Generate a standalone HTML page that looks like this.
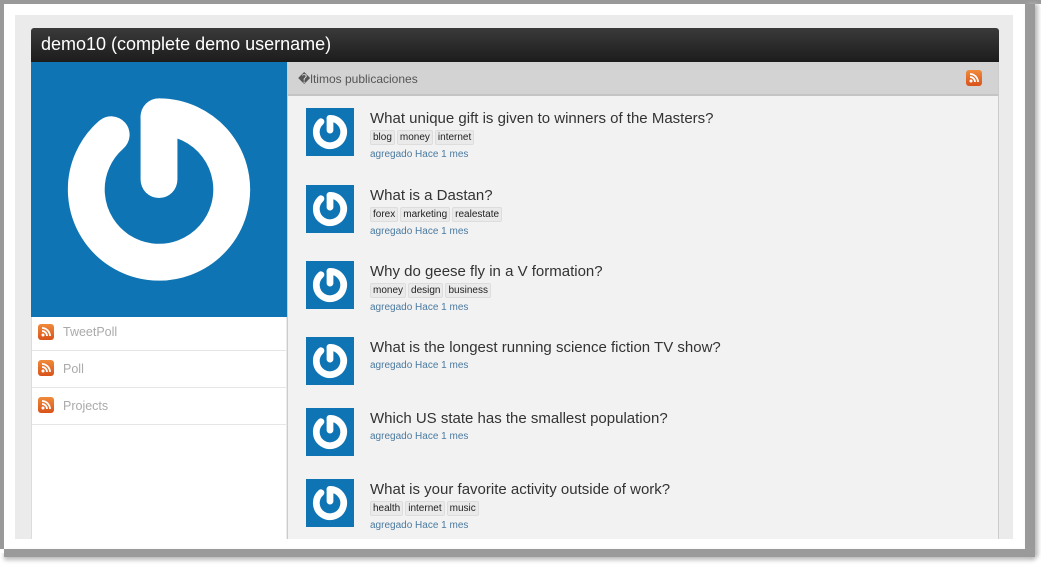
<!DOCTYPE html>
<html><head><meta charset="utf-8"><style>
*{margin:0;padding:0;box-sizing:border-box}
body{width:1041px;height:566px;background:#fff;font-family:"Liberation Sans",sans-serif;position:relative;overflow:hidden}
.frame{position:absolute;left:0;top:0;width:1041px;height:566px;background:#fff}
.b{position:absolute;background:#999}
.inner{position:absolute;left:15px;top:15px;width:998px;height:524px;background:#ebebeb}
.hdr{position:absolute;left:31px;top:28px;width:968px;height:34px;background:linear-gradient(#3a3a3a,#1c1c1c);border-radius:3px 3px 0 0;color:#fff;font-size:18px;padding:6px 10px}
.blue{position:absolute;left:31px;top:62px;width:256px;height:255px;background:#0e74b4}
.nav{position:absolute;left:31px;top:317px;width:255px;height:222px;background:#fff;border-left:1px solid #ddd}
.nav div{height:37px;border-bottom:1px solid #e6e6e6;color:#aaa;font-size:12.5px;padding-left:31px;line-height:30px;position:relative}
.nav div:first-child{height:34px}
.nav div+div{line-height:37px}
.rss{position:absolute;width:16px;height:16px;border-radius:3px;background:linear-gradient(#f08a3a,#d9531a)}
.rss svg{position:absolute;left:0;top:0}
.right{position:absolute;left:287px;top:62px;width:712px;height:477px;background:#f2f2f2;border-left:1px solid #ccc;border-right:1px solid #ccc}
.rh{height:34px;background:#d3d3d3;border-bottom:2px solid #c4c4c4;font-size:12px;color:#555;padding:10px 0 0 10px;position:relative}
.item{position:absolute;left:18px}
.th{position:absolute;left:0;top:0;width:48px;height:48px;background:#0e74b4}
.tx{position:absolute;left:64px;top:2px;white-space:nowrap}
.t{font-size:15px;color:#333}
.tags{margin-top:3px;font-size:10px}
.tags span{display:inline-block;border:1px solid #ddd;background:#eaeaea;padding:1px 2px;border-radius:2px;color:#222;margin-right:2px}
.d{font-size:10px;color:#4a7aa0;margin-top:4px}
</style></head><body>
<div class="frame"></div>
<div class="b" style="left:0;top:0;width:1041px;height:4px"></div>
<div class="b" style="left:0;top:0;width:4px;height:553px"></div>
<div class="b" style="left:1025px;top:4px;width:10px;height:553px;background:#9a9a9a;box-shadow:3px 0 4px #bbb"></div>
<div class="b" style="left:4px;top:549px;width:1031px;height:8px;background:#9a9a9a;box-shadow:0 3px 4px #bbb"></div>
<div class="b" style="left:0;top:549px;width:4px;height:4px;background:#fff"></div>
<div class="inner"></div>
<div class="hdr">demo10 (complete demo username)</div>
<div class="blue"><svg width="256" height="255" viewBox="0 0 256 256"><g fill="none" stroke="#fff" stroke-width="37" stroke-linecap="round"><path d="M128 55 A73 73 0 1 1 80 73"/><path d="M128 55 L128 118"/></g></svg></div>
<div class="nav">
<div><span class="rss" style="left:6px;top:7px"><svg width="16" height="16"><circle cx="5" cy="11" r="1.5" fill="#fff"/><path d="M4 7a5 5 0 0 1 5 5M4 4a8 8 0 0 1 8 8" stroke="#fff" stroke-width="1.8" fill="none"/></svg></span>TweetPoll</div>
<div><span class="rss" style="left:6px;top:9px"><svg width="16" height="16"><circle cx="5" cy="11" r="1.5" fill="#fff"/><path d="M4 7a5 5 0 0 1 5 5M4 4a8 8 0 0 1 8 8" stroke="#fff" stroke-width="1.8" fill="none"/></svg></span>Poll</div>
<div><span class="rss" style="left:6px;top:9px"><svg width="16" height="16"><circle cx="5" cy="11" r="1.5" fill="#fff"/><path d="M4 7a5 5 0 0 1 5 5M4 4a8 8 0 0 1 8 8" stroke="#fff" stroke-width="1.8" fill="none"/></svg></span>Projects</div>
</div>
<div class="right">
<div class="rh">�ltimos publicaciones<span class="rss" style="left:678px;top:8px"><svg width="16" height="16"><circle cx="5" cy="11" r="1.5" fill="#fff"/><path d="M4 7a5 5 0 0 1 5 5M4 4a8 8 0 0 1 8 8" stroke="#fff" stroke-width="1.8" fill="none"/></svg></span></div>
<div class="item" style="top:46px"><div class="th"><svg width="48" height="48" viewBox="0 0 256 256"><g fill="none" stroke="#fff" stroke-width="36" stroke-linecap="round"><path d="M128 55 A73 73 0 1 1 80 73"/><path d="M128 55 L128 118"/></g></svg></div><div class="tx"><div class="t">What unique gift is given to winners of the Masters?</div><div class="tags"><span>blog</span><span>money</span><span>internet</span></div><div class="d">agregado Hace 1 mes</div></div></div>
<div class="item" style="top:123px"><div class="th"><svg width="48" height="48" viewBox="0 0 256 256"><g fill="none" stroke="#fff" stroke-width="36" stroke-linecap="round"><path d="M128 55 A73 73 0 1 1 80 73"/><path d="M128 55 L128 118"/></g></svg></div><div class="tx"><div class="t">What is a Dastan?</div><div class="tags"><span>forex</span><span>marketing</span><span>realestate</span></div><div class="d">agregado Hace 1 mes</div></div></div>
<div class="item" style="top:199px"><div class="th"><svg width="48" height="48" viewBox="0 0 256 256"><g fill="none" stroke="#fff" stroke-width="36" stroke-linecap="round"><path d="M128 55 A73 73 0 1 1 80 73"/><path d="M128 55 L128 118"/></g></svg></div><div class="tx"><div class="t">Why do geese fly in a V formation?</div><div class="tags"><span>money</span><span>design</span><span>business</span></div><div class="d">agregado Hace 1 mes</div></div></div>
<div class="item" style="top:275px"><div class="th"><svg width="48" height="48" viewBox="0 0 256 256"><g fill="none" stroke="#fff" stroke-width="36" stroke-linecap="round"><path d="M128 55 A73 73 0 1 1 80 73"/><path d="M128 55 L128 118"/></g></svg></div><div class="tx"><div class="t">What is the longest running science fiction TV show?</div><div class="d">agregado Hace 1 mes</div></div></div>
<div class="item" style="top:346px"><div class="th"><svg width="48" height="48" viewBox="0 0 256 256"><g fill="none" stroke="#fff" stroke-width="36" stroke-linecap="round"><path d="M128 55 A73 73 0 1 1 80 73"/><path d="M128 55 L128 118"/></g></svg></div><div class="tx"><div class="t">Which US state has the smallest population?</div><div class="d">agregado Hace 1 mes</div></div></div>
<div class="item" style="top:417px"><div class="th"><svg width="48" height="48" viewBox="0 0 256 256"><g fill="none" stroke="#fff" stroke-width="36" stroke-linecap="round"><path d="M128 55 A73 73 0 1 1 80 73"/><path d="M128 55 L128 118"/></g></svg></div><div class="tx"><div class="t">What is your favorite activity outside of work?</div><div class="tags"><span>health</span><span>internet</span><span>music</span></div><div class="d">agregado Hace 1 mes</div></div></div>
</div>
</body></html>
